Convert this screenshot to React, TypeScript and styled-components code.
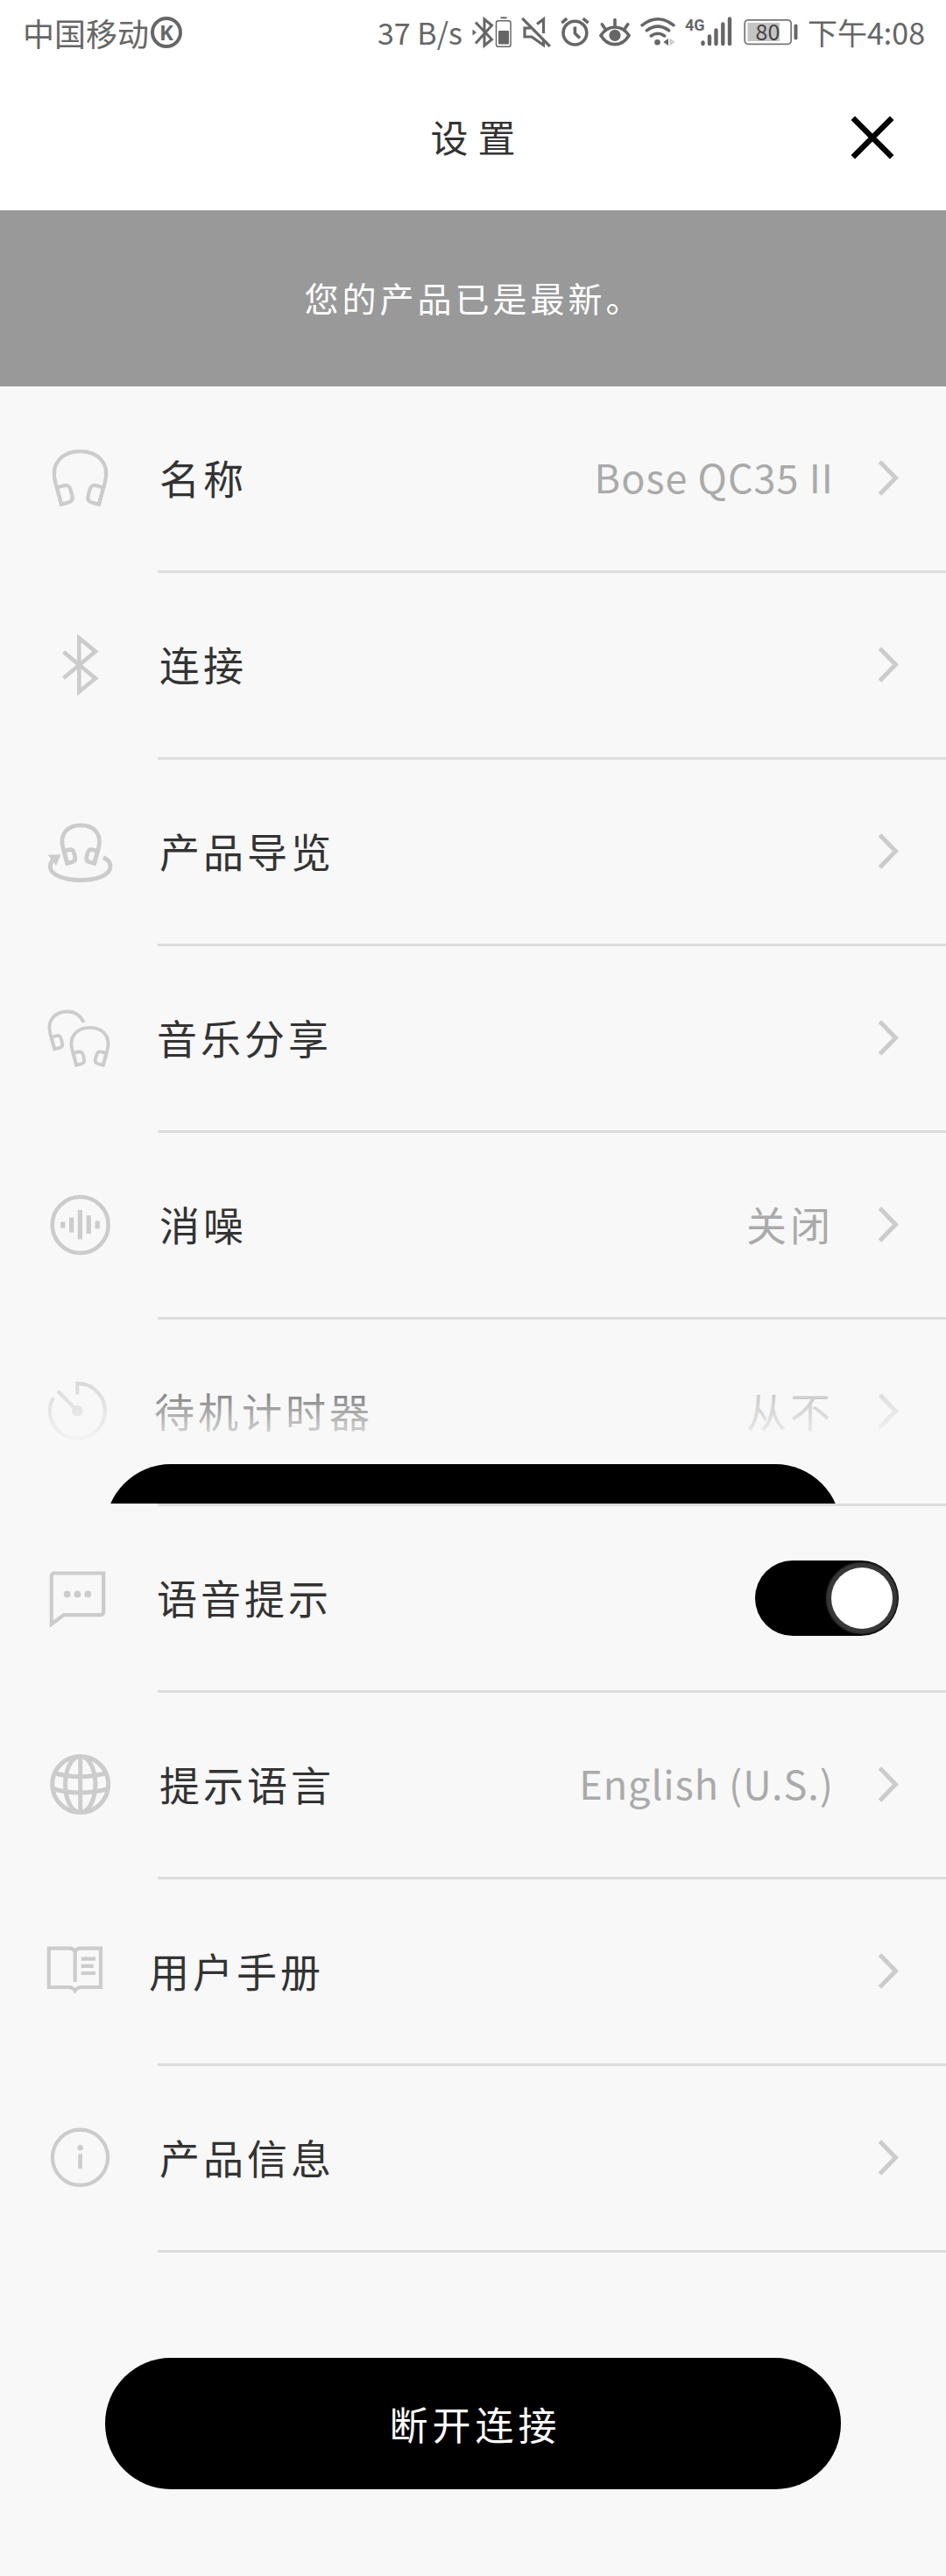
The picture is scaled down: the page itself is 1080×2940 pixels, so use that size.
import React, { useState } from 'react';
import styled, { createGlobalStyle } from 'styled-components';

const GlobalStyle = createGlobalStyle`
  * { box-sizing: border-box; }
  body {
    margin: 0;
    background: #f8f8f8;
    color: #333;
    font-family: "Noto Sans CJK SC", "Noto Sans", sans-serif;
  }
  button { font-family: inherit; }
`;

const Page = styled.div`
  display: flex;
  flex-direction: column;
`;

const StatusBar = styled.div`
  display: flex;
  align-items: center;
  justify-content: space-between;
  height: 73px;
  padding: 0 24px 0 26px;
  background: #fff;
  color: #666;
`;

const Carrier = styled.div`
  display: flex;
  align-items: center;
  gap: 2px;
  font-size: 36px;
  line-height: 48px;
`;

const CarrierBadge = styled.span`
  display: flex;
  align-items: center;
  justify-content: center;
  width: 36px;
  height: 36px;
  border: 4px solid #666;
  border-radius: 50%;
  font: bold 24px/28px "Noto Sans", sans-serif;
`;

const StatusItems = styled.div`
  display: flex;
  align-items: center;
  gap: 11px;
  font-size: 34px;
  line-height: 48px;

  svg { display: block; flex: none; }
`;

const Header = styled.header`
  display: grid;
  grid-template-columns: 108px 1fr 108px;
  align-items: center;
  height: 167px;
  padding: 0 30px;
  background: #fff;
`;

const Title = styled.h1`
  grid-column: 2;
  margin: 0;
  padding: 0 0 4px 11px;
  font-size: 43px;
  font-weight: 400;
  line-height: 60px;
  letter-spacing: 11px;
  text-align: center;
`;

const CloseButton = styled.button`
  display: flex;
  align-items: center;
  justify-content: center;
  height: 108px;
  padding: 0;
  border: 0;
  background: none;
  color: #000;
`;

const Banner = styled.p`
  display: flex;
  align-items: center;
  justify-content: center;
  height: 201px;
  margin: 0;
  padding: 0 0 4px 2px;
  background: #999;
  color: #fff;
  font-size: 39px;
  line-height: 60px;
  letter-spacing: 4px;
`;

const List = styled.ul`
  margin: 0;
  padding: 0;
  list-style: none;
`;

const Item = styled.li`
  position: relative;

  &::after {
    content: "";
    display: block;
    height: 3px;
    margin-left: 180px;
    background: #ddd;
  }
`;

const Row = styled.div`
  display: flex;
  align-items: center;
  width: 100%;
  height: 210px;
  padding: 0 54px 0 48px;
  border: 0;
  background: none;
  color: #333;
  text-align: left;
`;

const Label = styled.span`
  flex: 1;
  margin-left: 48px;
  padding-bottom: 4px;
  font-size: 46px;
  line-height: 66px;
  letter-spacing: 4px;
`;

const Value = styled.span<{ $latin?: boolean }>`
  margin-right: 50px;
  padding-bottom: 4px;
  color: #aaa;
  font-size: ${(p) => (p.$latin ? 45 : 46)}px;
  line-height: 66px;
  letter-spacing: ${(p) => (p.$latin ? 1 : 4)}px;
`;

const Glyph = styled.svg`
  display: block;
  flex: none;
  height: 86px;
  color: #ccc;
`;

const Switch = styled.input`
  appearance: none;
  display: flex;
  align-items: center;
  justify-content: ${(p) => (p.checked ? 'flex-end' : 'flex-start')};
  width: 164px;
  height: 86px;
  margin: 0;
  padding: 0 7px;
  border-radius: 43px;
  background: ${(p) => (p.checked ? '#000' : '#bbb')};
  overflow: hidden;

  &::before {
    content: "";
    width: 70px;
    height: 70px;
    border-radius: 50%;
    background: #fff;
    box-shadow: 0 0 2px 6px #383838;
  }
`;

/* The docked action showing through, with the row fading out above it */
const FadeOverlay = styled.div`
  position: absolute;
  inset: 0 0 3px;
  display: flex;
  flex-direction: column;
  justify-content: flex-end;
  padding: 0 120px;
  background: linear-gradient(#f8f8f800 36px, #f8f8f8 152px);
  pointer-events: none;
`;

const PillWindow = styled.div`
  height: 45px;
  overflow: hidden;
`;

const Pill = styled.div`
  height: 150px;
  border-radius: 75px;
  background: #000;
`;

const Footer = styled.footer`
  display: flex;
  padding: 120px 120px 99px;
`;

const DisconnectButton = styled.button`
  flex: 1;
  height: 150px;
  padding: 0 0 0 5px;
  border: 0;
  border-radius: 75px;
  background: #000;
  color: #fff;
  font-size: 44px;
  line-height: 60px;
  letter-spacing: 5px;
`;

type IconProps = { width: number; children: React.ReactNode };

function Icon({ width, children }: IconProps) {
  return (
    <Glyph
      width={width}
      viewBox={`0 0 ${width} 86`}
      fill="none"
      stroke="currentColor"
      strokeWidth="4.2"
      aria-hidden="true"
    >
      {children}
    </Glyph>
  );
}

const CUP =
  'M17 53.5 L24 51.4 C29 50 31.4 51.5 32.6 56 L34.3 62.4 C35.4 66.6 34 69.3 30.2 70.4 L22 72.6 Z';

function Headphones() {
  return (
    <>
      <path d="M22 72.6 L15.3 48 C9 25 24 12.2 43.5 12.2 S78 25 71.7 48 L65 72.6" />
      <path d={CUP} />
      <path d={CUP} transform="translate(87 0) scale(-1 1)" />
    </>
  );
}

const NameIcon = () => (
  <Icon width={86}>
    <Headphones />
  </Icon>
);

const BluetoothIcon = () => (
  <Icon width={86}>
    <path strokeWidth="4.6" d="M24.5 28 L61 58.3 L42.3 73.5 V12.2 L61 27.6 L24.5 58" />
  </Icon>
);

const TourIcon = () => (
  <Icon width={86}>
    <g transform="translate(12.9 4) scale(.72)" strokeWidth="6.6">
      <Headphones />
    </g>
    <path
      strokeWidth="4.8"
      d="M70 49.5 C75.5 52 78 56 78 60 C78 70 62 75.5 44 75.5 S9.3 70 9.3 60 C9.3 56.5 10.5 54 13.5 51"
    />
    <path d="M6.5 46.5 H21.5 L16 59 Z" fill="currentColor" stroke="none" />
  </Icon>
);

const ShareIcon = () => (
  <Icon width={83}>
    <g transform="translate(23.6 22.2) scale(.71)" strokeWidth="5.4">
      <Headphones />
    </g>
    <g transform="translate(-1.4 3.8) scale(.71)" strokeWidth="5.4">
      <path d="M22 72.6 L15.3 48 C9 25 24 12.2 43.5 12.2 C54 12.2 64 18 69 30" />
      <path d={CUP} />
    </g>
  </Icon>
);

const NoiseIcon = () => (
  <Icon width={86}>
    <circle cx="43.7" cy="43" r="32" strokeWidth="4.6" />
    <path
      strokeWidth="5.2"
      d="M23.7 39.5 V46.5 M33.6 34.5 V51.5 M43.4 26 V59.5 M53.3 32.2 V53 M63.2 38.5 V47.2"
    />
  </Icon>
);

const TimerIcon = () => (
  <Icon width={80}>
    <path d="M40.3 23.5 V10.8 A31.5 31.5 0 1 1 12.6 27.4" />
    <path d="M18 19.8 L40.3 42.2" />
    <circle cx="40.3" cy="42.2" r="6.2" fill="currentColor" stroke="none" />
  </Icon>
);

const VoiceIcon = () => (
  <Icon width={83}>
    <path d="M10.8 72.5 V18 Q10.8 14.5 14.3 14.5 H70.2 V58.5 Q70.2 62.2 66.5 62.2 H24.8 Z" />
    <g fill="currentColor" stroke="none">
      <circle cx="28.7" cy="38.4" r="3.9" />
      <circle cx="40.4" cy="38.4" r="3.9" />
      <circle cx="52.2" cy="38.4" r="3.9" />
    </g>
  </Icon>
);

const GlobeIcon = () => (
  <Icon width={86}>
    <g strokeWidth="5">
      <circle cx="43.7" cy="42.5" r="32" />
      <ellipse cx="43.7" cy="42.5" rx="17.2" ry="32" />
      <path d="M43.7 10 V75 M14 29.5 Q43.7 38 73.4 29.5 M12 47.5 Q43.7 56.5 75.4 47.5" />
    </g>
  </Icon>
);

const ManualIcon = () => (
  <Icon width={74}>
    <path d="M7.8 16.7 H31 Q36 16.7 37.7 20.5 Q39.5 16.7 44.5 16.7 H67 V61 H45.5 Q40.5 61 37.7 64.8 Q35 61 30 61 H7.8 Z" />
    <path d="M37.7 18 V55 M44.7 28.7 H61 M44.7 36.8 H58.7 M44.7 45 H61" />
  </Icon>
);

const InfoIcon = () => (
  <Icon width={86}>
    <circle cx="43.5" cy="42.3" r="31.6" />
    <path d="M43.6 38.3 V55.2" strokeWidth="4.6" />
    <circle cx="43.6" cy="31.2" r="3.2" fill="currentColor" stroke="none" />
  </Icon>
);

const ChevronSvg = styled.svg`
  display: block;
  flex: none;
  color: #ccc;
`;

const Chevron = () => (
  <ChevronSvg width="24" height="42" viewBox="0 0 24 42" fill="none" stroke="currentColor" strokeWidth="5" aria-hidden="true">
    <path d="M2.5 2 L20.5 20.5 L2.5 39" />
  </ChevronSvg>
);

function StatusIcons() {
  return (
    <>
      <svg width="45" height="38" viewBox="0 0 45 38" fill="none" stroke="#666" strokeWidth="3" role="img" aria-label="蓝牙">
        <path d="M4 7.5 L22.5 27 L14 34 V4 L22.5 11 L4 31.5" />
        <path d="M0.5 15.5 L5 19 L0.5 22.5 Z" fill="#666" stroke="none" />
        <rect x="27.5" y="5.8" width="16.5" height="29.5" rx="2.5" strokeWidth="1.5" />
        <path d="M32.5 2.3 H39.5" strokeWidth="2" />
        <rect x="30" y="17" width="12" height="15.5" rx="1" fill="#666" stroke="none" />
      </svg>
      <svg width="34" height="38" viewBox="0 0 34 38" fill="none" stroke="#666" strokeWidth="3.2" role="img" aria-label="静音">
        <path d="M1.2 2.8 L32.8 34.8" />
        <path d="M11 14 H4 V24 H12 L25.5 33.5 V28" />
        <path d="M18 9.5 L25.5 4 V20" />
      </svg>
      <svg width="33" height="38" viewBox="0 0 33 38" fill="none" stroke="#666" strokeWidth="3.6" role="img" aria-label="闹钟">
        <circle cx="16.4" cy="19.6" r="13.4" />
        <path d="M16.4 12.5 V20 L22 25.5" />
        <path d="M1.3 8.2 L7.2 3.2 M31.6 8.2 L25.6 3.2" />
      </svg>
      <svg width="36" height="38" viewBox="0 0 36 38" fill="none" stroke="#666" strokeWidth="3.6" strokeLinecap="round" role="img" aria-label="护眼模式">
        <path d="M2 22.5 C10 9.8 26 9.8 34 22.5 C26 36 10 36 2 22.5 Z" />
        <circle cx="18" cy="22.3" r="6.6" fill="#666" stroke="none" />
        <path d="M18 4.5 V12 M3.3 9.8 L6.2 14 M32.7 9.8 L29.8 14" />
      </svg>
      <svg width="40" height="38" viewBox="0 0 40 38" fill="none" stroke="#666" strokeWidth="3.5" strokeLinecap="round" role="img" aria-label="无线网络">
        <path d="M2 10.8 Q20 -3.2 38 10.8 M7.3 16.8 Q20 7.5 32.7 16.8 M12.3 23 Q20 17.5 27.7 23" />
        <circle cx="19.5" cy="30.3" r="3.3" fill="#666" stroke="none" />
        <path d="M26.3 30 L32 26 V34 Z" fill="#666" stroke="none" />
        <path d="M33.5 25.5 L39.5 30 L33.5 34.5 Z" fill="#ccc" stroke="none" />
      </svg>
      <svg width="56" height="38" viewBox="0 0 56 38" stroke="#666" strokeWidth="4.4" strokeLinecap="round" role="img" aria-label="4G 信号">
        <text x="0" y="17" fill="#666" stroke="none" fontSize="18" fontWeight="700" fontFamily="Roboto, sans-serif">
          4G
        </text>
        <path d="M20.5 30.5 V32 M28 23.5 V32 M35.5 16.5 V32 M43.3 9.5 V32 M51 3.5 V32" />
      </svg>
      <svg width="62" height="38" viewBox="0 0 62 38" fill="none" role="img" aria-label="电量 80%">
        <rect x="1.2" y="4.8" width="53" height="27.5" rx="4" stroke="#777" strokeWidth="1.8" />
        <rect x="4.5" y="8" width="36.5" height="21" fill="#c4c4c4" />
        <rect x="57.5" y="9.5" width="4" height="18" rx="2" fill="#666" />
        <text x="27.5" y="28" fill="#444" textAnchor="middle" fontSize="25" fontFamily="'Noto Sans CJK SC', sans-serif">
          80
        </text>
      </svg>
    </>
  );
}

type Entry = {
  label: string;
  icon: React.ReactNode;
  value?: string;
  latin?: boolean;
  faded?: boolean;
  toggle?: boolean;
};

const entries: Entry[] = [
  { label: '名称', icon: <NameIcon />, value: 'Bose QC35 II', latin: true },
  { label: '连接', icon: <BluetoothIcon /> },
  { label: '产品导览', icon: <TourIcon /> },
  { label: '音乐分享', icon: <ShareIcon /> },
  { label: '消噪', icon: <NoiseIcon />, value: '关闭' },
  { label: '待机计时器', icon: <TimerIcon />, value: '从不', faded: true },
  { label: '语音提示', icon: <VoiceIcon />, toggle: true },
  { label: '提示语言', icon: <GlobeIcon />, value: 'English (U.S.)', latin: true },
  { label: '用户手册', icon: <ManualIcon /> },
  { label: '产品信息', icon: <InfoIcon /> },
];

function SettingsItem({ entry }: { entry: Entry }) {
  const [on, setOn] = useState(true);

  if (entry.toggle) {
    return (
      <Item>
        <Row>
          {entry.icon}
          <Label as="label" htmlFor="voice-prompts">
            {entry.label}
          </Label>
          <Switch
            id="voice-prompts"
            type="checkbox"
            role="switch"
            checked={on}
            onChange={(e) => setOn(e.target.checked)}
          />
        </Row>
      </Item>
    );
  }

  return (
    <Item>
      <Row as="button">
        {entry.icon}
        <Label>{entry.label}</Label>
        {entry.value && <Value $latin={entry.latin}>{entry.value}</Value>}
        <Chevron />
      </Row>
      {entry.faded && (
        <FadeOverlay aria-hidden="true">
          <PillWindow>
            <Pill />
          </PillWindow>
        </FadeOverlay>
      )}
    </Item>
  );
}

export default function App() {
  return (
    <Page>
      <GlobalStyle />
      <StatusBar>
        <Carrier>
          中国移动
          <CarrierBadge>K</CarrierBadge>
        </Carrier>
        <StatusItems>
          <span>37 B/s</span>
          <StatusIcons />
          <span>下午4:08</span>
        </StatusItems>
      </StatusBar>
      <Header>
        <Title>设置</Title>
        <CloseButton aria-label="关闭">
          <svg width="50" height="50" viewBox="0 0 50 50" stroke="currentColor" strokeWidth="6.4" aria-hidden="true">
            <path d="M2.8 2.8 L47.2 47.2 M47.2 2.8 L2.8 47.2" />
          </svg>
        </CloseButton>
      </Header>
      <main>
        <Banner>您的产品已是最新。</Banner>
        <List>
          {entries.map((entry) => (
            <SettingsItem key={entry.label} entry={entry} />
          ))}
        </List>
      </main>
      <Footer>
        <DisconnectButton>断开连接</DisconnectButton>
      </Footer>
    </Page>
  );
}
